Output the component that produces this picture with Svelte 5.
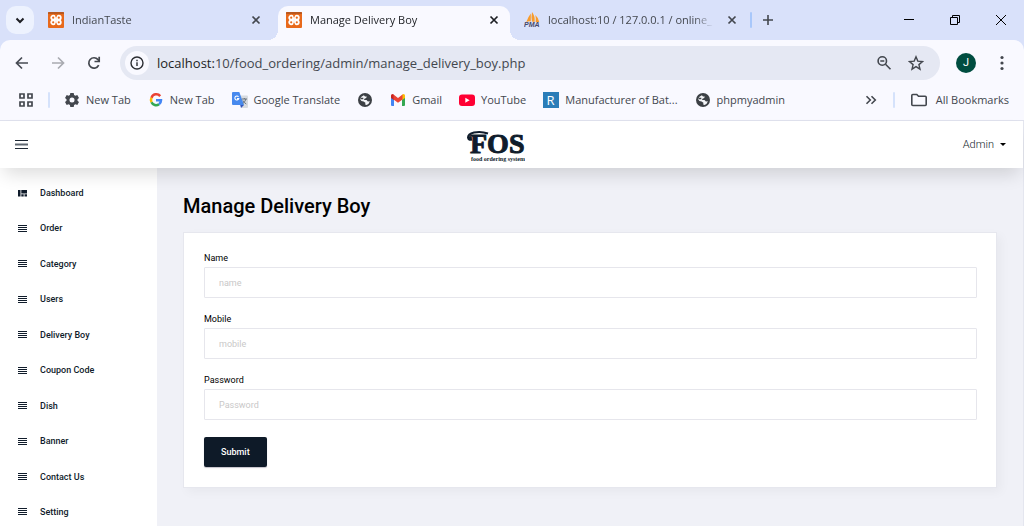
<script>
  const tabs = [
    { title: 'IndianTaste', icon: 'xampp', active: false },
    { title: 'Manage Delivery Boy', icon: 'xampp', active: true },
    { title: 'localhost:10 / 127.0.0.1 / online_', icon: 'pma', active: false }
  ];
  const bookmarks = [
    { label: 'New Tab', icon: 'gear' },
    { label: 'New Tab', icon: 'google' },
    { label: 'Google Translate', icon: 'translate' },
    { label: '', icon: 'globe' },
    { label: 'Gmail', icon: 'gmail' },
    { label: 'YouTube', icon: 'youtube' },
    { label: 'Manufacturer of Bat...', icon: 'r' },
    { label: 'phpmyadmin', icon: 'globe' }
  ];
  const menu = ['Dashboard', 'Order', 'Category', 'Users', 'Delivery Boy', 'Coupon Code', 'Dish', 'Banner', 'Contact Us', 'Setting'];
  const fields = [
    { id: 'name', label: 'Name', placeholder: 'name', type: 'text' },
    { id: 'mobile', label: 'Mobile', placeholder: 'mobile', type: 'text' },
    { id: 'password', label: 'Password', placeholder: 'Password', type: 'password' }
  ];
</script>

{#snippet icon(name)}
  <svg class="icon" viewBox="0 0 16 16" width="16" height="16" aria-hidden="true">
    {#if name === 'xampp'}
      <rect width="16" height="16" rx="1" fill="#e8691b" />
      <path d="M0 1a1 1 0 0 1 1-1h14a1 1 0 0 1 1 1v1H0z" fill="#b9581f" />
      <g fill="none" stroke="#fff" stroke-width="1.800">
        <circle cx="5.200" cy="5.700" r="2" />
        <circle cx="10.800" cy="5.700" r="2" />
        <circle cx="5.200" cy="10.300" r="2" />
        <circle cx="10.800" cy="10.300" r="2" />
        <path d="M5.500 8h5" />
      </g>
      <path d="M8 2.500v2.800M8 10.700v2.800" stroke="#e8691b" stroke-width="1" />
    {:else if name === 'pma'}
      <path d="M6.800 1.500Q4 5 2.300 10q2-.8 4.500-.6zM8 0q3.200 4 2.600 10l-2.700-.6q-.8-4 .1-9.400zM11.300 3q3.500 3 4 7.300l-3.600-.4q.5-3.800-.4-6.900z" fill="#f99b2a" />
      <text x="0" y="15" font-family="Liberation Sans" font-size="7" font-weight="700" font-style="italic" fill="#46486b">PMA</text>
    {:else if name === 'gear'}
      <path fill="#43474e" fill-rule="evenodd" d="M6.300 1h3.400l.4 2 1.300.7 1.900-.7L15 6l-1.500 1.300v1.400L15 10l-1.700 3-1.900-.7-1.300.7-.4 2H6.300l-.4-2-1.300-.7-1.900.7L1 10l1.500-1.300V7.300L1 6l1.700-3 1.900.7L5.900 3zM8 5.500a2.500 2.500 0 1 0 0 5 2.500 2.500 0 0 0 0-5z" />
    {:else if name === 'google'}
      <g fill="none" stroke-width="2.500">
        <path d="M12.200 4.100A5 5 0 0 0 3.500 5.800" stroke="#ea4335" />
        <path d="M3.500 5.800a5 5 0 0 0 0 4.400" stroke="#fbbc05" />
        <path d="M3.500 10.200a5 5 0 0 0 7.500 2" stroke="#34a853" />
        <path d="M11 12.200A5 5 0 0 0 13 8.200H8" stroke="#4285f4" />
      </g>
    {:else if name === 'translate'}
      <path d="M7 3.500h8a1 1 0 0 1 1 1V15a1 1 0 0 1-1 1H9.500z" fill="#d8dbe0" />
      <path d="M9 16l-.8-3H12z" fill="#3457ba" />
      <path d="M1 0h6.300L12 13H1a1 1 0 0 1-1-1V1a1 1 0 0 1 1-1z" fill="#4789ee" />
      <path d="M6.500 4.800A2 2 0 1 0 6.800 6.600H5" fill="none" stroke="#fff" stroke-width="1.100" />
      <path d="M9.800 7H15M12.300 6v1M13.800 7q-.4 2.800-3 4.500M11 8.500q1 2.200 3.300 3.500" fill="none" stroke="#68727c" />
    {:else if name === 'globe'}
      <circle cx="8" cy="8" r="7" fill="#3c4045" />
      <path d="M3 7Q4 4.200 6.900 3.200L8 4.500h1.800L9.200 6 7.500 6.800 7 8l2.500.1 1.400 1.300 2-.2q-.8 2.800-3.400 3.800l-1.300-.5.200-1.700-1.800-1.300-2.200-.6z" fill="#f4f5f8" />
      <path d="M3.500 6.500h2.800M10.500 7h2.500" stroke="#3c4045" stroke-width="1.300" />
    {:else if name === 'gmail'}
      <path d="M1 4.500V13a1 1 0 0 0 1 1h2V6z" fill="#4285f4" />
      <path d="M15 4.500V13a1 1 0 0 1-1 1h-2V6z" fill="#34a853" />
      <path d="M1 4V3.500Q1 2 2.500 2l1.500.8V8L1 6z" fill="#c5221f" />
      <path d="M15 4V3.500Q15 2 13.500 2l-1.500.8V8l3-2z" fill="#fbbc04" />
      <path d="M3.500 2.500 8 5.900l4.500-3.400v5L8 10.800 3.500 7.500z" fill="#ea4335" />
    {:else if name === 'youtube'}
      <rect y="2.500" width="16" height="11.500" rx="3" fill="#ff0033" />
      <path d="M6.300 5.700v5l4.300-2.500z" fill="#fff" />
    {:else if name === 'r'}
      <rect width="16" height="16" fill="#2b7db8" />
      <text x="3.500" y="12.500" font-family="Open Sans" font-size="13" fill="#fff">R</text>
    {/if}
  </svg>
{/snippet}

<div class="window">
  <div class="tabstrip">
    <button class="search-tabs" aria-label="Search tabs">
      <svg viewBox="0 0 16 16" width="16" height="16"><path d="M4.500 6.500 8 10l3.500-3.500" fill="none" stroke="#1d1f24" stroke-width="2" /></svg>
    </button>
    <div class="tabs">
      {#each tabs as tab}
        <div class="tab" class:active={tab.active}>
          {@render icon(tab.icon)}
          <span class="tab-title">{tab.title}</span>
          <button class="plain close" aria-label="Close tab">
            <svg viewBox="0 0 16 16" width="16" height="16"><path d="m4.500 4.500 7 7m0-7-7 7" stroke="currentColor" stroke-width="1.700" /></svg>
          </button>
        </div>
      {/each}
    </div>
    <span class="rule strong"></span>
    <button class="plain new-tab" aria-label="New tab">
      <svg viewBox="0 0 16 16" width="16" height="16"><path d="M8 3v10M3 8h10" stroke="#43474e" stroke-width="1.600" /></svg>
    </button>
    <div class="window-controls">
      <button class="plain" aria-label="Minimize"><svg viewBox="0 0 10 10" width="10" height="10"><path d="M0 4.500h10" stroke="#000" /></svg></button>
      <button class="plain" aria-label="Restore"><svg viewBox="0 0 10 10" width="10" height="10"><path d="M.5 2.500h7v7h-7zM2.500 2.500v-2h7v7h-2" fill="none" stroke="#000" /></svg></button>
      <button class="plain" aria-label="Close"><svg viewBox="0 0 10 10" width="10" height="10"><path d="m0 0 10 10M10 0 0 10" stroke="#000" /></svg></button>
    </div>
  </div>

  <div class="chrome">
    <div class="toolbar">
      <button class="plain nav" aria-label="Back"><svg viewBox="0 0 16 16" width="16" height="16"><path d="M14 8H3M8 2.500 2.500 8 8 13.500" fill="none" stroke="#474b54" stroke-width="1.700" /></svg></button>
      <button class="plain nav" aria-label="Forward"><svg viewBox="0 0 16 16" width="16" height="16"><path d="M2 8h11M8 2.500 13.500 8 8 13.500" fill="none" stroke="#a9abb1" stroke-width="1.700" /></svg></button>
      <button class="plain nav" aria-label="Reload"><svg viewBox="0 0 16 16" width="16" height="16"><path d="M12.700 10.200A5.200 5.200 0 1 1 12 4.600l1 1.400" fill="none" stroke="#43474e" stroke-width="1.700" /><path d="M13.200 1.800v4.700H8.500" fill="none" stroke="#43474e" stroke-width="1.700" /></svg></button>
      <div class="omnibox">
        <button class="plain info" aria-label="Site information"><svg viewBox="0 0 16 16" width="16" height="16"><circle cx="8" cy="8" r="6" fill="none" stroke="#2b2d32" stroke-width="1.400" /><path d="M8 7.200V11M8 4.800v1.400" stroke="#2b2d32" stroke-width="1.400" /></svg></button>
        <span class="url"><b>localhost:</b>10/food_ordering/admin/manage_delivery_boy.php</span>
        <button class="plain" aria-label="Zoom"><svg viewBox="0 0 16 16" width="16" height="16"><circle cx="6.300" cy="6" r="4.200" fill="none" stroke="#43474e" stroke-width="1.600" /><path d="m9.500 9.200 5 5M4.300 6h4" stroke="#43474e" stroke-width="1.600" /></svg></button>
        <button class="plain star" aria-label="Bookmark this tab"><svg viewBox="0 0 16 16" width="16" height="16"><path d="m8 1.800 1.800 4.300 4.700.4-3.600 3.100 1.100 4.600L8 11.700l-4 2.500 1.100-4.600-3.600-3.100 4.700-.4z" fill="none" stroke="#43474e" stroke-width="1.400" /></svg></button>
      </div>
      <button class="avatar">J</button>
      <button class="plain more" aria-label="Browser menu"><svg viewBox="0 0 16 16" width="16" height="16" fill="#43474e"><circle cx="8" cy="2.500" r="1.600" /><circle cx="8" cy="8" r="1.600" /><circle cx="8" cy="13.500" r="1.600" /></svg></button>
    </div>
    <div class="bookmarks">
      <button class="plain apps" aria-label="Apps"><svg viewBox="0 0 16 16" width="16" height="16"><path d="M2 2h4v4H2zM10 2h4v4h-4zM2 10h4v4H2zM10 10h4v4h-4z" fill="none" stroke="#43474e" stroke-width="1.700" /></svg></button>
      <span class="rule"></span>
      <div class="links">
        {#each bookmarks as mark}
          <a href="#bookmark" aria-label={mark.label || 'Web page'}>{@render icon(mark.icon)}{#if mark.label}<span>{mark.label}</span>{/if}</a>
        {/each}
      </div>
      <button class="plain overflow" aria-label="More bookmarks"><svg viewBox="0 0 16 16" width="16" height="16"><path d="m3.500 4.200 3.800 3.800-3.800 3.800M8.500 4.200l3.800 3.800-3.800 3.800" fill="none" stroke="#43474e" stroke-width="1.600" /></svg></button>
      <span class="rule"></span>
      <button class="plain all"><svg viewBox="0 0 16 16" width="16" height="16"><path d="M.8 3.500q0-1 1-1h4l1.700 1.800h6.700q1 0 1 1v7.200q0 1-1 1H1.800q-1 0-1-1z" fill="none" stroke="#43474e" stroke-width="1.600" /></svg>All Bookmarks</button>
    </div>
  </div>

  <div class="page">
    <header>
      <button class="plain hamburger" aria-label="Toggle menu"><svg viewBox="0 0 13 9" width="13" height="9"><path d="M0 .5h13M0 8.500h13" stroke="#1d2733" /><path d="M0 4.500h13" stroke="#5f6770" stroke-width="2" /></svg></button>
      <a class="logo" href="#home" aria-label="FOS food ordering system">
        <svg viewBox="0 0 60 36" width="60" height="36" fill="#0f1c2b">
          <text x="5" y="26" font-family="Liberation Serif, serif" font-weight="700" font-size="28" stroke="#0f1c2b" stroke-width="1">FOS</text>
          <path d="M23 6.500Q16 4 9 5.500 3 7 3 10.500q.5 3 4 2" fill="none" stroke="#0f1c2b" stroke-width="2" />
          <circle cx="5" cy="11" r="2" />
          <text x="6" y="34" font-family="Liberation Serif, serif" font-weight="700" font-size="6">food ordering system</text>
        </svg>
      </a>
      <button class="plain admin">Admin<span class="caret"></span></button>
    </header>
    <div class="body">
      <nav>
        <ul>
          {#each menu as item, i}
            <li>
              <a href="#{item}">
                {#if i === 0}
                  <svg viewBox="0 0 9 7" width="9" height="7" fill="#101c2b"><path d="M0 0h2.500v6.500H0zM3.300 0H9v3.500H3.300zM3.300 4.300h2.400v2.200H3.300zM6.500 4.300H9v2.200H6.500z" /></svg>
                {:else}
                  <svg viewBox="0 0 9 7" width="9" height="7"><path d="M0 .5h9M0 2.500h9M0 4.500h9M0 6.500h9" stroke="#101c2b" /></svg>
                {/if}
                <span>{item}</span>
              </a>
            </li>
          {/each}
        </ul>
      </nav>
      <main>
        <h1>Manage Delivery Boy</h1>
        <form class="card" onsubmit={(e) => e.preventDefault()}>
          {#each fields as field}
            <div class="field">
              <label for={field.id}>{field.label}</label>
              <input id={field.id} type={field.type} placeholder={field.placeholder} />
            </div>
          {/each}
          <button class="submit">Submit</button>
        </form>
      </main>
    </div>
  </div>
</div>

<style>
  :global(body) {
    margin: 0;
  }
  * {
    box-sizing: border-box;
  }
  svg {
    display: block;
    flex: none;
  }
  button {
    font: inherit;
    color: inherit;
  }
  a {
    color: inherit;
    text-decoration: none;
  }
  .plain {
    display: flex;
    align-items: center;
    justify-content: center;
    padding: 0;
    border: 0;
    background: none;
    flex: none;
  }
  .window {
    display: flex;
    flex-direction: column;
    min-height: 100vh;
    background: #d9e1fa;
    font: 11px/16px 'Open Sans', sans-serif;
    color: #43474e;
  }
  .tabstrip {
    display: flex;
    align-items: center;
    height: 40px;
    padding-left: 6px;
  }
  .search-tabs {
    display: flex;
    align-items: center;
    justify-content: center;
    width: 28px;
    height: 28px;
    padding: 0;
    border: 0;
    border-radius: 10px;
    background: #edf2fe;
    flex: none;
  }
  .tabs {
    display: flex;
    gap: 6px;
    margin: 0 2px 0 6px;
    align-self: stretch;
    padding-top: 6px;
    flex: 0 1 708px;
    min-width: 0;
  }
  .tab {
    position: relative;
    display: flex;
    align-items: center;
    gap: 8px;
    flex: 1 1 0;
    min-width: 0;
    padding: 0 8px 6px;
  }
  .tab.active {
    background: #f9f9ff;
    border-radius: 10px 10px 0 0;
    color: #1d1f24;
  }
  .tab.active::before,
  .tab.active::after {
    content: '';
    position: absolute;
    bottom: 0;
    width: 10px;
    height: 10px;
  }
  .tab.active::before {
    right: 100%;
    background: radial-gradient(circle at 0 0, transparent 10px, #f9f9ff 10px);
  }
  .tab.active::after {
    left: 100%;
    background: radial-gradient(circle at 100% 0, transparent 10px, #f9f9ff 10px);
  }
  .tab-title {
    flex: 1;
    overflow: hidden;
    white-space: nowrap;
    mask-image: linear-gradient(to left, transparent, #000 20px);
  }
  .close {
    margin-left: 2px;
  }
  .rule {
    width: 2px;
    height: 16px;
    border-radius: 1px;
    background: #d5e2fb;
    flex: none;
  }
  .rule.strong {
    background: #a8c7fa;
  }
  .new-tab {
    margin-left: 8px;
  }
  .window-controls {
    display: flex;
    margin-left: auto;
    align-self: stretch;
  }
  .window-controls button {
    width: 46px;
  }
  .chrome {
    background: #f9f9ff;
    border-radius: 10px 10px 0 0;
    border-bottom: 1px solid #dfe1ed;
  }
  .toolbar {
    display: flex;
    align-items: center;
    padding: 6px 14px 0;
  }
  .nav {
    margin-right: 20px;
  }
  .omnibox {
    display: flex;
    align-items: center;
    flex: 1;
    min-width: 0;
    height: 34px;
    margin-left: -2px;
    padding: 0 16px 0 5px;
    border-radius: 17px;
    background: #e5e8f3;
    font-size: 13px;
  }
  .info {
    width: 24px;
    height: 24px;
    border-radius: 50%;
    background: #f9f9ff;
  }
  .url {
    flex: 1;
    min-width: 0;
    margin-left: 8px;
    overflow: hidden;
    white-space: nowrap;
    line-height: 20px;
  }
  .url b {
    font-weight: 400;
    color: #1d1f24;
  }
  .star {
    margin-left: 16px;
  }
  .avatar {
    width: 20px;
    height: 20px;
    margin: 0 18px 0 16px;
    padding: 0;
    border: 0;
    border-radius: 50%;
    background: #004d40;
    color: #fff;
    font: 11px/20px Roboto, sans-serif;
    flex: none;
  }
  .bookmarks {
    display: flex;
    align-items: center;
    height: 40px;
    padding: 0 15px 0 18px;
  }
  .apps {
    margin-right: 14px;
  }
  .links {
    display: flex;
    gap: 17px;
    flex: 1;
    min-width: 0;
    margin-left: 14px;
    overflow: hidden;
    white-space: nowrap;
  }
  .links a {
    display: flex;
    gap: 6px;
  }
  .overflow {
    margin-right: 14px;
  }
  .all {
    gap: 9px;
    margin-left: 16px;
  }
  .page {
    display: flex;
    flex-direction: column;
    flex: 1;
    border-right: 1px solid #e4e6ef;
    background: #f0f1f7;
    font-family: Roboto, sans-serif;
    color: #101c2b;
  }
  header {
    position: relative;
    display: flex;
    justify-content: space-between;
    align-items: center;
    height: 47px;
    padding: 0 17px 0 15px;
    background: #fff;
    box-shadow: 0 10px 18px -4px rgba(0, 0, 0, 0.14);
  }
  .admin {
    gap: 6px;
    font-weight: 300;
    font-size: 11px;
    line-height: 16px;
  }
  .caret {
    border: 3px solid transparent;
    border-top-color: #000;
    border-bottom: 0;
  }
  .body {
    display: flex;
    flex: 1;
  }
  nav {
    display: flex;
    flex: none;
    width: 157px;
    background: #fff;
  }
  ul {
    display: flex;
    flex-direction: column;
    justify-content: space-between;
    margin: 0;
    padding: 11px 0 0 18px;
    list-style: none;
  }
  li a {
    display: flex;
    align-items: center;
    gap: 13px;
    height: 28px;
    font-weight: 500;
    font-size: 9px;
    line-height: 14px;
  }
  main {
    flex: 1;
    min-width: 0;
    padding: 26px;
  }
  h1 {
    margin: 0 0 14px;
    font-weight: 500;
    font-size: 20px;
    line-height: 24px;
    color: #000;
  }
  .card {
    padding: 18px 19px 20px 20px;
    border: 1px solid #e6e7ee;
    background: #fff;
    box-shadow: 4px 4px 10px rgba(0, 0, 30, 0.04);
  }
  .field {
    display: flex;
    flex-direction: column;
    gap: 2px;
    margin-bottom: 14px;
  }
  label {
    font-size: 9px;
    line-height: 14px;
    color: #000;
  }
  input {
    width: 100%;
    height: 31px;
    padding: 0 14px;
    border: 1px solid #e6e6ec;
    border-radius: 1px;
    background: #fff;
    font: 9px/14px Roboto, sans-serif;
    color: #101c2b;
  }
  input::placeholder {
    color: #c9c8c8;
    opacity: 1;
  }
  .submit {
    display: block;
    height: 30px;
    margin-top: 17px;
    padding: 0 17px;
    border: 0;
    border-radius: 2px;
    background: #0e1a28;
    box-shadow: 0 1px 1px rgba(60, 50, 80, 0.3);
    font-weight: 500;
    font-size: 9px;
    color: #fff;
  }
</style>
